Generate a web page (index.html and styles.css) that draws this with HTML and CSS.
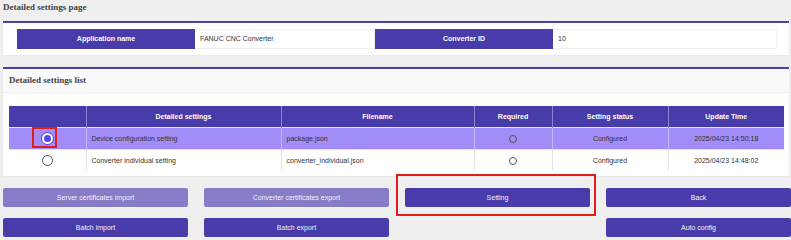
FILE: index.html
```html
<!DOCTYPE html>
<html lang="en">
<head>
    <meta charset="UTF-8">
    <meta name="viewport" content="width=device-width, initial-scale=1.0">
    <title>Detailed settings page</title>
    <link rel="stylesheet" href="styles.css">
</head>
<body>

    <div class="page-title">Detailed settings page</div>

    <div class="panel">
        <div class="info-row">
            <div class="info-label">Application name</div>
            <div class="info-value">FANUC CNC Converter</div>
            <div class="info-label">Converter ID</div>
            <div class="info-value wide">10</div>
        </div>
    </div>

    <div class="panel list-panel">
        <div class="panel-head">Detailed settings list</div>
        <div class="panel-body">
            <table class="settings-table">
                <colgroup>
                    <col style="width: 77px">
                    <col style="width: 195px">
                    <col style="width: 193px">
                    <col style="width: 78px">
                    <col style="width: 116px">
                    <col style="width: 116px">
                </colgroup>
                <thead>
                    <tr>
                        <th></th>
                        <th>Detailed settings</th>
                        <th>Filename</th>
                        <th>Required</th>
                        <th>Setting status</th>
                        <th>Update Time</th>
                    </tr>
                </thead>
                <tbody>
                    <tr class="selected">
                        <td class="center"><span class="radio checked"></span><span class="mark radio-mark"></span></td>
                        <td>Device configuration setting</td>
                        <td>package.json</td>
                        <td class="center"><span class="dot"></span></td>
                        <td class="center">Configured</td>
                        <td class="center">2025/04/23 14:50:18</td>
                    </tr>
                    <tr>
                        <td class="center"><span class="radio"></span></td>
                        <td>Converter individual setting</td>
                        <td>converter_individual.json</td>
                        <td class="center"><span class="dot"></span></td>
                        <td class="center">Configured</td>
                        <td class="center">2025/04/23 14:48:02</td>
                    </tr>
                </tbody>
            </table>
        </div>
    </div>

    <div class="actions">
        <button class="btn light">Server certificates import</button>
        <button class="btn light">Converter certificates export</button>
        <div class="btn-wrap"><button class="btn">Setting</button><span class="mark btn-mark"></span></div>
        <button class="btn">Back</button>
        <button class="btn">Batch import</button>
        <button class="btn">Batch export</button>
        <div></div>
        <button class="btn">Auto config</button>
    </div>

</body>
</html>
```

FILE: styles.css
```css
body {
    margin: 0;
    background-color: #efefef;
    font-family: "Liberation Sans", Arial, sans-serif;
    font-size: 7px;
    color: #333;
}

.page-title {
    height: 21px;
    line-height: 14px;
    padding-left: 3px;
    font-family: "Liberation Serif", "Times New Roman", serif;
    font-weight: bold;
    font-size: 9px;
    color: #444;
}

.panel {
    margin: 0 2px 0 3px;
    background-color: #fff;
    border-top: 2px solid #4a3fae;
    box-shadow: 0 0 1px rgba(0, 0, 0, 0.15);
}

.info-row {
    display: flex;
    padding: 6px 12px 6px 14px;
}

.info-label {
    width: 178px;
    height: 20px;
    line-height: 20px;
    background-color: #473caa;
    color: #fff;
    font-weight: bold;
    text-align: center;
}

.info-value {
    width: 174px;
    height: 18px;
    line-height: 18px;
    padding-left: 5px;
    border: 1px solid #f1f1f1;
    border-left: none;
    color: #333;
}

.info-value.wide {
    flex: 1;
}

.list-panel {
    margin-top: 12px;
}

.panel-head {
    height: 23px;
    line-height: 22px;
    padding-left: 6px;
    background-color: #fafafa;
    border-bottom: 1px solid #efefef;
    font-family: "Liberation Serif", "Times New Roman", serif;
    font-weight: bold;
    font-size: 9px;
    color: #444;
}

.panel-body {
    padding: 13px 5px 5px 6px;
}

.settings-table {
    width: 775px;
    border-collapse: collapse;
    table-layout: fixed;
}

.settings-table th {
    height: 21px;
    padding: 0;
    background-color: #473caa;
    color: #fff;
    font-weight: bold;
    border-left: 1px solid #8d86cf;
}

.settings-table th:first-child,
.settings-table td:first-child {
    border-left: none;
}

.settings-table td {
    height: 21px;
    padding: 0 0 0 5px;
    border-left: 1px solid #e4e4e4;
    border-top: 1px solid #e4e4e4;
    color: #333;
}

.settings-table td.center {
    text-align: center;
    padding: 0;
}

.settings-table tr.selected td {
    background-color: #a28cf8;
    border-left-color: #c6b8fb;
}

.settings-table td:first-child {
    position: relative;
}

.radio {
    display: inline-block;
    width: 9px;
    height: 9px;
    border: 1px solid #555;
    border-radius: 50%;
    background-color: #fff;
    vertical-align: middle;
}

.radio.checked {
    border-color: #fff;
    background-color: #5547f2;
    box-shadow: 0 0 0 1px #5547f2;
    width: 7px;
    height: 7px;
    border-width: 2px;
}

.dot {
    display: inline-block;
    width: 6px;
    height: 6px;
    border: 1px solid #555;
    border-radius: 50%;
    vertical-align: middle;
}

.mark {
    position: absolute;
    border: 2px solid #e21b1b;
    pointer-events: none;
}

.radio-mark {
    left: 23px;
    top: -1px;
    width: 21px;
    height: 17px;
}

.actions {
    display: grid;
    grid-template-columns: repeat(4, 185px);
    column-gap: 16px;
    row-gap: 11px;
    padding: 12px 0 0 3px;
}

.btn {
    height: 19px;
    padding: 0;
    border: none;
    border-radius: 2px;
    background-color: #473caa;
    color: #f2f2f2;
    font-family: "Liberation Sans", Arial, sans-serif;
    font-size: 7px;
}

.btn.light {
    background-color: #867cc8;
}

.btn-wrap {
    position: relative;
    display: flex;
}

.btn-wrap .btn {
    flex: 1;
}

.btn-mark {
    left: -9px;
    right: -6px;
    top: -14px;
    bottom: -9px;
}
```
